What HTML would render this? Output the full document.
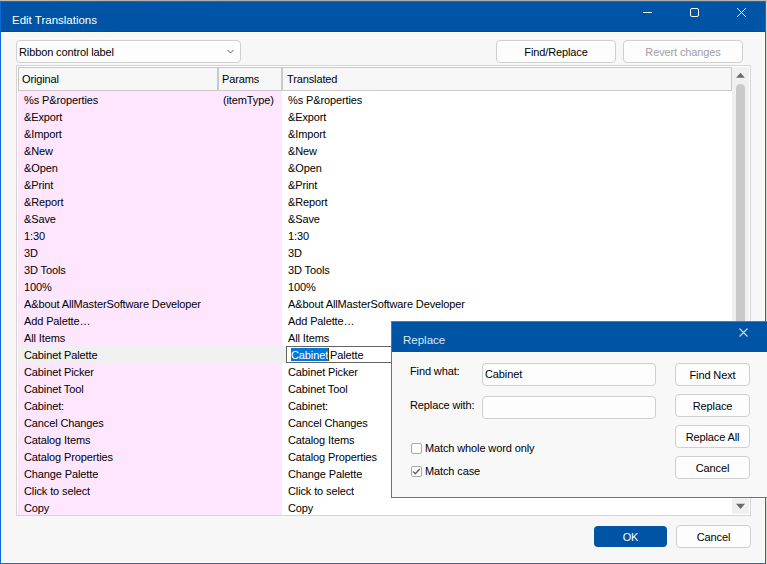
<!DOCTYPE html>
<html><head><meta charset="utf-8"><style>
*{box-sizing:border-box;margin:0;padding:0}
html,body{width:767px;height:564px;overflow:hidden;background:#dcd9d4;font-family:"Liberation Sans",sans-serif;font-size:11px;color:#000}
.a{position:absolute}
.t{position:absolute;height:17px;line-height:17px;white-space:pre;letter-spacing:-0.12px}
.rl{position:absolute;left:18px;width:264px}
.btn{position:absolute;border:1px solid #d0d0d0;background:#fdfdfd;border-radius:4px;text-align:center;white-space:pre;letter-spacing:-0.12px;height:23px;line-height:21px;padding-top:1px}
.fld{position:absolute;border:1px solid #d0d0d0;background:#fdfdfd;border-radius:4px;}
</style></head><body>
<!-- backdrop top row -->
<div class="a" style="left:0;top:0;width:767px;height:1px;background:linear-gradient(90deg,#c4bcae,#aaaaaa 30%,#aaaaaa 90%,#bdbab4)"></div>
<!-- window -->
<div class="a" style="left:0;top:1px;width:766px;height:563px;background:#0b6bd6"></div>
<div class="a" style="left:1px;top:2px;width:764px;height:30px;background:#0054a6"></div>
<div class="a" style="left:1px;top:31px;width:764px;height:1px;background:#004f9e"></div>
<div class="a" style="left:1px;top:32px;width:764px;height:531px;background:#ffffff"></div>
<div class="a" style="left:2px;top:33px;width:762px;height:529px;background:#f7f7f7"></div>
<div class="a" style="left:12px;top:10px;color:#fff;font-size:11.5px;line-height:20px;white-space:pre">Edit Translations</div>
<!-- title buttons -->
<svg class="a" style="left:630px;top:0" width="130" height="32">
 <rect x="13" y="12" width="9" height="1" fill="#fff"/>
 <rect x="60.5" y="8.5" width="8" height="8" rx="1.5" fill="none" stroke="#fff" stroke-width="1"/>
 <g fill="#fff" opacity="0.95"><rect x="107" y="8" width="1" height="1"/><rect x="115" y="8" width="1" height="1"/><rect x="108" y="9" width="1" height="1"/><rect x="114" y="9" width="1" height="1"/><rect x="109" y="10" width="1" height="1"/><rect x="113" y="10" width="1" height="1"/><rect x="110" y="11" width="1" height="1"/><rect x="112" y="11" width="1" height="1"/><rect x="111" y="12" width="1" height="1"/><rect x="111" y="12" width="1" height="1"/><rect x="112" y="13" width="1" height="1"/><rect x="110" y="13" width="1" height="1"/><rect x="113" y="14" width="1" height="1"/><rect x="109" y="14" width="1" height="1"/><rect x="114" y="15" width="1" height="1"/><rect x="108" y="15" width="1" height="1"/><rect x="115" y="16" width="1" height="1"/><rect x="107" y="16" width="1" height="1"/></g>
 <path d="M107.5 8.5 L115.5 16.5 M115.5 8.5 L107.5 16.5" stroke="#fff" stroke-width="0.6" opacity="0.6"/>
</svg>
<!-- combo -->
<div class="fld" style="left:16px;top:40px;width:225px;height:23px"></div>
<div class="t" style="left:19px;top:44px">Ribbon control label</div>
<svg class="a" style="left:226px;top:48px" width="10" height="8"><path d="M1.5 2 L4.5 5 L7.5 2" fill="none" stroke="#606060" stroke-width="1"/></svg>
<!-- buttons -->
<div class="btn" style="left:496px;top:40px;width:120px">Find/Replace</div>
<div class="btn" style="left:623px;top:40px;width:120px;color:#a0a0a0">Revert changes</div>
<!-- table -->
<div class="a" style="left:16px;top:65px;width:735px;height:451px;border:1px solid #d5d5d5;background:#fff"></div>
<div class="a" style="left:18px;top:67px;width:200px;height:24px;border:1px solid #c9c9c9;background:#f7f7f7"></div>
<div class="a" style="left:218px;top:67px;width:65px;height:24px;border:1px solid #c9c9c9;background:#f7f7f7"></div>
<div class="a" style="left:281px;top:67px;width:451px;height:24px;border:1px solid #c9c9c9;border-left:2px solid #c9c9c9;background:#f7f7f7"></div>
<div class="t" style="left:22px;top:71px">Original</div>
<div class="t" style="left:222px;top:71px">Params</div>
<div class="t" style="left:287px;top:71px">Translated</div>
<div class="rl" style="top:91px;height:17px;background:#ffe6ff;width:264px"></div>
<div class="t" style="left:24px;top:92px">%s P&amp;roperties</div>
<div class="t" style="left:223px;top:92px">(itemType)</div>
<div class="t" style="left:288px;top:92px">%s P&amp;roperties</div>
<div class="rl" style="top:108px;height:17px;background:#ffe6ff;width:264px"></div>
<div class="t" style="left:24px;top:109px">&amp;Export</div>
<div class="t" style="left:288px;top:109px">&amp;Export</div>
<div class="rl" style="top:125px;height:17px;background:#ffe6ff;width:264px"></div>
<div class="t" style="left:24px;top:126px">&amp;Import</div>
<div class="t" style="left:288px;top:126px">&amp;Import</div>
<div class="rl" style="top:142px;height:17px;background:#ffe6ff;width:264px"></div>
<div class="t" style="left:24px;top:143px">&amp;New</div>
<div class="t" style="left:288px;top:143px">&amp;New</div>
<div class="rl" style="top:159px;height:17px;background:#ffe6ff;width:264px"></div>
<div class="t" style="left:24px;top:160px">&amp;Open</div>
<div class="t" style="left:288px;top:160px">&amp;Open</div>
<div class="rl" style="top:176px;height:17px;background:#ffe6ff;width:264px"></div>
<div class="t" style="left:24px;top:177px">&amp;Print</div>
<div class="t" style="left:288px;top:177px">&amp;Print</div>
<div class="rl" style="top:193px;height:17px;background:#ffe6ff;width:264px"></div>
<div class="t" style="left:24px;top:194px">&amp;Report</div>
<div class="t" style="left:288px;top:194px">&amp;Report</div>
<div class="rl" style="top:210px;height:17px;background:#ffe6ff;width:264px"></div>
<div class="t" style="left:24px;top:211px">&amp;Save</div>
<div class="t" style="left:288px;top:211px">&amp;Save</div>
<div class="rl" style="top:227px;height:17px;background:#ffe6ff;width:264px"></div>
<div class="t" style="left:24px;top:228px">1:30</div>
<div class="t" style="left:288px;top:228px">1:30</div>
<div class="rl" style="top:244px;height:17px;background:#ffe6ff;width:264px"></div>
<div class="t" style="left:24px;top:245px">3D</div>
<div class="t" style="left:288px;top:245px">3D</div>
<div class="rl" style="top:261px;height:17px;background:#ffe6ff;width:264px"></div>
<div class="t" style="left:24px;top:262px">3D Tools</div>
<div class="t" style="left:288px;top:262px">3D Tools</div>
<div class="rl" style="top:278px;height:17px;background:#ffe6ff;width:264px"></div>
<div class="t" style="left:24px;top:279px">100%</div>
<div class="t" style="left:288px;top:279px">100%</div>
<div class="rl" style="top:295px;height:17px;background:#ffe6ff;width:264px"></div>
<div class="t" style="left:24px;top:296px">A&amp;bout AllMasterSoftware Developer</div>
<div class="t" style="left:288px;top:296px">A&amp;bout AllMasterSoftware Developer</div>
<div class="rl" style="top:312px;height:17px;background:#ffe6ff;width:264px"></div>
<div class="t" style="left:24px;top:313px">Add Palette…</div>
<div class="t" style="left:288px;top:313px">Add Palette…</div>
<div class="rl" style="top:329px;height:17px;background:#ffe6ff;width:264px"></div>
<div class="t" style="left:24px;top:330px">All Items</div>
<div class="t" style="left:288px;top:330px">All Items</div>
<div class="rl" style="top:346px;height:17px;background:#f0f0f0;width:268px"></div>
<div class="t" style="left:24px;top:347px">Cabinet Palette</div>
<div class="rl" style="top:363px;height:17px;background:#ffe6ff;width:264px"></div>
<div class="t" style="left:24px;top:364px">Cabinet Picker</div>
<div class="t" style="left:288px;top:364px">Cabinet Picker</div>
<div class="rl" style="top:380px;height:17px;background:#ffe6ff;width:264px"></div>
<div class="t" style="left:24px;top:381px">Cabinet Tool</div>
<div class="t" style="left:288px;top:381px">Cabinet Tool</div>
<div class="rl" style="top:397px;height:17px;background:#ffe6ff;width:264px"></div>
<div class="t" style="left:24px;top:398px">Cabinet:</div>
<div class="t" style="left:288px;top:398px">Cabinet:</div>
<div class="rl" style="top:414px;height:17px;background:#ffe6ff;width:264px"></div>
<div class="t" style="left:24px;top:415px">Cancel Changes</div>
<div class="t" style="left:288px;top:415px">Cancel Changes</div>
<div class="rl" style="top:431px;height:17px;background:#ffe6ff;width:264px"></div>
<div class="t" style="left:24px;top:432px">Catalog Items</div>
<div class="t" style="left:288px;top:432px">Catalog Items</div>
<div class="rl" style="top:448px;height:17px;background:#ffe6ff;width:264px"></div>
<div class="t" style="left:24px;top:449px">Catalog Properties</div>
<div class="t" style="left:288px;top:449px">Catalog Properties</div>
<div class="rl" style="top:465px;height:17px;background:#ffe6ff;width:264px"></div>
<div class="t" style="left:24px;top:466px">Change Palette</div>
<div class="t" style="left:288px;top:466px">Change Palette</div>
<div class="rl" style="top:482px;height:17px;background:#ffe6ff;width:264px"></div>
<div class="t" style="left:24px;top:483px">Click to select</div>
<div class="t" style="left:288px;top:483px">Click to select</div>
<div class="rl" style="top:499px;height:16px;background:#ffe6ff;width:264px"></div>
<div class="t" style="left:24px;top:500px">Copy</div>
<div class="t" style="left:288px;top:500px">Copy</div>
<!-- edit cell -->
<div class="a" style="left:286px;top:346px;width:120px;height:17px;border:1px solid #646464;background:#fff"></div>
<div class="a" style="left:291px;top:348px;width:38px;height:13px;background:#0078d7"></div>
<div class="t" style="left:291px;top:347px;color:#fff">Cabinet</div>
<div class="t" style="left:330px;top:347px">Palette</div>
<div class="a" style="left:328px;top:348px;width:1px;height:13px;background:#603000"></div>
<!-- scrollbar -->
<div class="a" style="left:732px;top:67px;width:17px;height:447px;background:#f0f0f0"></div>
<svg class="a" style="left:732px;top:66px" width="18" height="449">
 <path d="M4.2 11.8 L12.8 11.8 L8.5 6.8 Z" fill="#6a6a6a"/>
 <rect x="4" y="18" width="9" height="300" rx="4.5" fill="#c8c8c8"/>
 <path d="M4 437.8 L13 437.8 L8.5 443 Z" fill="#6a6a6a"/>
</svg>
<!-- bottom buttons -->
<div class="a" style="left:593px;top:525px;width:75px;height:23px;border-radius:5px;background:#fffbf6"></div>
<div class="a" style="left:594px;top:526px;width:73px;height:21px;border-radius:4px;background:#0054a6;color:#fff;text-align:center;line-height:21px;padding-top:1px;letter-spacing:-0.12px">OK</div>
<div class="btn" style="left:676px;top:525px;width:75px">Cancel</div>
<!-- Replace dialog -->
<div class="a" style="left:391px;top:321px;width:380px;height:177px;background:#747270"></div>
<div class="a" style="left:392px;top:322px;width:380px;height:30px;background:#0054a6"></div>
<div class="a" style="left:392px;top:352px;width:380px;height:145px;background:#f8f8f8"></div>
<div class="a" style="left:403px;top:330px;color:#dfe8f2;font-size:11.5px;line-height:20px;white-space:pre">Replace</div>
<svg class="a" style="left:736px;top:326px" width="14" height="14"><path d="M3.5 2.5 L11.5 10.5 M11.5 2.5 L3.5 10.5" stroke="#d0dae6" stroke-width="1.1"/></svg>
<div class="t" style="left:410px;top:363px">Find what:</div>
<div class="t" style="left:410px;top:397px">Replace with:</div>
<div class="fld" style="left:482px;top:363px;width:174px;height:23px"></div>
<div class="t" style="left:485px;top:366px">Cabinet</div>
<div class="fld" style="left:482px;top:396px;width:174px;height:23px"></div>
<div class="btn" style="left:675px;top:363px;width:75px">Find Next</div>
<div class="btn" style="left:675px;top:394px;width:75px">Replace</div>
<div class="btn" style="left:675px;top:425px;width:75px">Replace All</div>
<div class="btn" style="left:675px;top:456px;width:75px">Cancel</div>
<div class="a" style="left:411px;top:443px;width:11px;height:11px;border:1px solid #a8a8a8;border-radius:2px;background:#fdfdfd"></div>
<div class="t" style="left:425px;top:440px">Match whole word only</div>
<div class="a" style="left:411px;top:466px;width:11px;height:11px;border:1px solid #a8a8a8;border-radius:2px;background:#fdfdfd"></div>
<svg class="a" style="left:411px;top:466px" width="11" height="11"><path d="M2 5.5 L4.3 7.8 L8.8 3" fill="none" stroke="#606060" stroke-width="1.4"/></svg>
<div class="t" style="left:425px;top:463px">Match case</div>
</body></html>
